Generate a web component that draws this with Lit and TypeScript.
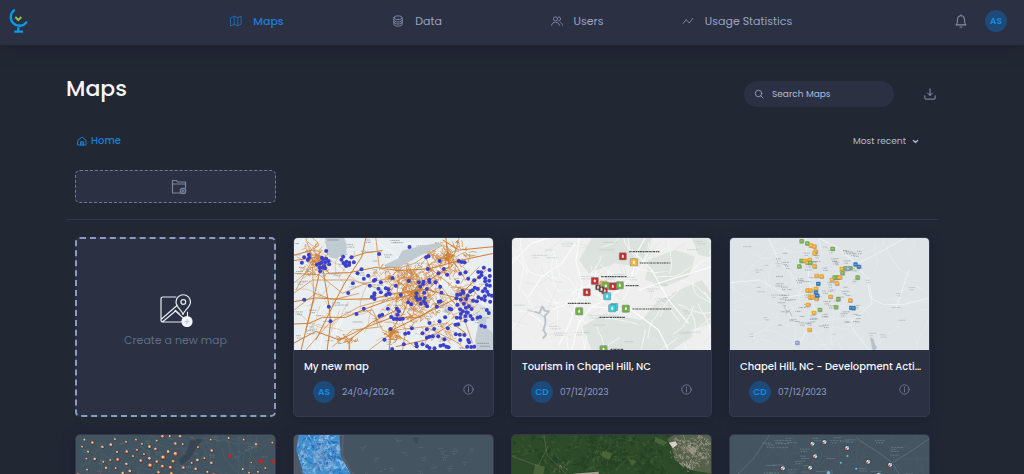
import { LitElement, html, css, svg, nothing } from 'lit';
import type { TemplateResult } from 'lit';
import { customElement, property } from 'lit/decorators.js';
import { classMap } from 'lit/directives/class-map.js';

/* ---------- helpers for the procedural map thumbnails ---------- */

type Rng = () => number;
type Pt = [number, number];

function rng(seed: number): Rng {
  let s = seed;
  return () => {
    s = (s + 0x6d2b79f5) | 0;
    let t = Math.imul(s ^ (s >>> 15), 1 | s);
    t = (t + Math.imul(t ^ (t >>> 7), 61 | t)) ^ t;
    return ((t ^ (t >>> 14)) >>> 0) / 4294967296;
  };
}

const n = (v: number) => v.toFixed(1);

/** A path of wandering strokes scattered over a box. */
function wander(r: Rng, count: number, x: number, y: number, w: number, h: number, step: number, parts = 6): string {
  let d = '';
  for (let i = 0; i < count; i++) {
    let px = x + r() * w;
    let py = y + r() * h;
    let a = r() * Math.PI * 2;
    d += `M${n(px)} ${n(py)}`;
    for (let k = 0; k < parts; k++) {
      a += (r() - 0.5) * 0.8;
      px += Math.cos(a) * step;
      py += Math.sin(a) * step;
      d += `L${n(px)} ${n(py)}`;
    }
  }
  return d;
}

/** Dense tangle of streets round a centre. */
function tangle(r: Rng, cx: number, cy: number, rx: number, ry: number, count: number, step: number): string {
  let d = '';
  for (let i = 0; i < count; i++) {
    const a = r() * Math.PI * 2;
    const q = r();
    const px = cx + Math.cos(a) * rx * q;
    const py = cy + Math.sin(a) * ry * q;
    d += `M${n(px)} ${n(py)}l${n((r() - 0.5) * step)} ${n((r() - 0.5) * step)}l${n((r() - 0.5) * step)} ${n((r() - 0.5) * step)}`;
  }
  return d;
}

/** Rows of tiny marks standing for place names too small to read. */
function marks(r: Rng, count: number, x: number, y: number, w: number, h: number, len = 26): string {
  let d = '';
  for (let i = 0; i < count; i++) {
    const px = x + r() * w;
    const py = y + r() * h;
    d += `M${n(px)} ${n(py)}h${n(len * (0.5 + r() * 0.7))}`;
    if (r() > 0.5) d += `M${n(px + 3)} ${n(py + 7)}h${n(len * (0.4 + r() * 0.4))}`;
  }
  return d;
}

function frame(x: number, y: number, w: number, h: number, body: TemplateResult<2>) {
  return html`<svg class="thumb" viewBox="${x} ${y} ${w} ${h}" preserveAspectRatio="xMidYMin slice" aria-hidden="true">${body}</svg>`;
}

/* ---------- thumbnails ---------- */

const NETWORK_DOTS: Pt[] = [
  [371, 51], [280, 72], [121, 63], [69, 74], [55, 82], [70, 83], [66, 90], [48, 98], [108, 83], [112, 88], [121, 86],
  [128, 93], [93, 104], [101, 101], [107, 98], [118, 97], [130, 103], [101, 113], [110, 113], [118, 115], [103, 124],
  [115, 108], [172, 80], [167, 89], [197, 82], [173, 99], [182, 95], [190, 98], [204, 97], [178, 104], [190, 105],
  [181, 108], [227, 118], [215, 130], [247, 137], [234, 146], [201, 160], [187, 189], [264, 152], [268, 149], [285, 157],
  [252, 167], [278, 176], [320, 144], [330, 167], [300, 175], [308, 178], [285, 187], [308, 189], [312, 192], [301, 195],
  [266, 190], [258, 201], [265, 196], [266, 207], [345, 195], [55, 209], [129, 230], [134, 274], [212, 252], [234, 236],
  [281, 258], [289, 254], [306, 236], [333, 236], [339, 244], [335, 254], [316, 261], [324, 267], [332, 267], [342, 268],
  [351, 266], [314, 297], [296, 329], [378, 295], [358, 311], [368, 309], [354, 343], [319, 357], [421, 82], [428, 79],
  [461, 93], [426, 117], [458, 130], [474, 117], [484, 134], [519, 93], [527, 96], [536, 97], [369, 153], [399, 157],
  [413, 155], [430, 149], [431, 156], [403, 170], [449, 157], [411, 162], [423, 177], [463, 170], [467, 188], [392, 190],
  [415, 188], [391, 201], [417, 204], [403, 206], [414, 214], [419, 221], [405, 221], [424, 229], [367, 217], [376, 223],
  [395, 209], [453, 230], [459, 215], [464, 214], [491, 236], [478, 262], [461, 274], [431, 279], [423, 298], [445, 297],
  [486, 295], [410, 310], [423, 323], [431, 320], [441, 319], [457, 319], [476, 328], [391, 341], [393, 349], [410, 343],
  [424, 349], [431, 354], [446, 355], [464, 347], [473, 345], [482, 350], [488, 352], [510, 313], [522, 314], [536, 315],
  [523, 330], [547, 330], [550, 337], [544, 350], [556, 351], [565, 350], [523, 131], [539, 127], [516, 156], [514, 194],
  [524, 193], [530, 183], [533, 188], [512, 205], [525, 209], [546, 197], [553, 185], [560, 181], [567, 173], [576, 177],
  [565, 151], [547, 146], [577, 126], [586, 127], [594, 113], [587, 136], [580, 142], [611, 120], [612, 138], [598, 145],
  [598, 154], [610, 152], [603, 165], [612, 167], [598, 176], [604, 185], [591, 184], [609, 194], [597, 199], [618, 197],
  [587, 206], [597, 210], [613, 215], [578, 202], [541, 207], [562, 212], [573, 214], [515, 224], [534, 221], [540, 233],
  [549, 229], [523, 238], [531, 244], [542, 247], [557, 237], [525, 252], [539, 258], [546, 248], [513, 263], [509, 284],
  [517, 283], [523, 263], [539, 272], [560, 267], [583, 261], [603, 240], [609, 249], [587, 287], [597, 290], [575, 263],
  [554, 258], [496, 238],
];

function networkMap() {
  const r = rng(11);
  return frame(23, 24, 600, 336, svg`
    <rect x="23" y="24" width="600" height="336" fill="#e9eef0"/>
    <path d="M480 180L623 240V330L560 250Z" fill="#dce3e5"/>
    <path d=${wander(r, 40, 23, 24, 600, 336, 16)} fill="none" stroke="#fff" stroke-width="2"/>
    <path d=${marks(r, 80, 23, 26, 580, 330)} stroke="#76818a" stroke-width="2.5" stroke-dasharray="3 2 5 1" opacity=".75"/>
    <g fill="none" stroke="#cf7f33" stroke-linejoin="round">
      <path stroke-width="3" d="M23 92L90 82 130 130 190 128 270 112 340 122 430 116 520 92 623 70M23 76L80 60 110 92M190 84L240 68 290 62M23 215L90 204 180 208 262 206 330 190 420 178 520 206 560 196M23 282L70 280 110 262 180 262 240 236 300 214 370 196M46 360L70 260 96 150 108 90M23 340L90 304 160 330 240 292 320 262 400 262 480 210M110 110L130 230 134 280 124 360M190 360L190 330 260 276 340 236M240 24L228 80 176 160 150 210 90 330M380 180L352 250 316 300 310 360M316 302L420 250 510 206 600 120M480 24L490 110 430 150 380 210M470 30L520 60 623 50M540 310L500 280 420 330 330 350"/>
      <path stroke-width="2" d="M23 130L100 134 170 190 240 160 320 142M60 24L80 90 30 180M23 190L80 150 200 150 290 180M250 360L330 300 420 290 520 340M200 250L260 240 290 300 360 330 400 360M440 120L500 170 560 180 600 220M340 120L330 230 360 300 350 360M520 24L500 90 540 150 580 110M420 84L450 150 530 250 560 340M25 240L90 190 140 210 220 190M140 350L200 300 290 290M270 24L280 110M60 360L130 280 220 230 330 200M80 110L84 210 60 300M23 160L70 120M240 240L270 262 276 290"/>
      <path stroke-width="1.6" d=${tangle(r, 92, 90, 40, 56, 110, 26)}/>
      <path stroke-width="1.8" d=${tangle(r, 385, 190, 88, 90, 330, 28)}/>
      <path stroke-width="1.8" d=${tangle(r, 485, 85, 70, 54, 150, 26)}/>
      <path stroke-width="1.5" d=${tangle(r, 530, 200, 60, 80, 80, 30)}/>
      <path stroke-width="2.4" d=${tangle(r, 318, 312, 20, 22, 50, 18)}/>
      <path stroke-width="1.6" d=${tangle(r, 350, 135, 90, 30, 60, 30)}/>
      <path stroke-width="1.2" opacity=".8" d=${wander(r, 28, 23, 100, 480, 240, 16)}/>
      <path stroke-width="1.4" d=${tangle(r, 480, 310, 80, 40, 30, 34)}/>
      <path stroke-width="2" d=${tangle(r, 180, 330, 40, 12, 24, 20)}/>
    </g>
    <path d="M118 24l4 30 8 28 20 4 28-14 6-20-8-28z" fill="#c0cad1"/>
    <path d="M296 104l40-18 14-24 40-10 60-12 16-2-6 12-40 18-40 22-40 22-40 4z" fill="#c0cad1"/>
    <path d="M572 250l6 30-10 50 4 30h51V312l-24-24 4-20z" fill="#c3ccd3"/>
    <path d="M296 112l50 0 40-12 50-34 36-22" fill="none" stroke="#cf7f33" stroke-width="2"/>
    <path d="M575 340h34M584 349h28M326 38h26M125 30h34" stroke="#76818a" stroke-width="2.5" stroke-dasharray="4 2"/>
    <g fill="#3c41cc">${NETWORK_DOTS.map(([x, y]) => svg`<circle cx=${x} cy=${y} r="6"/>`)}</g>`);
}

function pin(x: number, y: number, fill: string, size = 20) {
  return svg`<rect x=${x - size / 2 - 2} y=${y - size / 2 - 2} width=${size + 4} height=${size + 4} rx="4" fill="#6d7275" opacity=".65"/>
    <rect x=${x - size / 2} y=${y - size / 2} width=${size} height=${size} rx="3" fill=${fill}/>
    <path d="M${x - 3} ${y + 4}v-6l3-4 3 4v6z" fill="#fff" opacity=".9"/>`;
}

function tourismMap() {
  const r = rng(29);
  const red = '#c62f31', green = '#6fae45', amber = '#f2b43a', cyan = '#3ccbdc', brown = '#5b3a35';
  return frame(19, 24, 600, 336, svg`
    <rect x="19" y="24" width="600" height="336" fill="#eeefee"/>
    <path d="M260 24H440L430 60 400 110 330 100 250 130 222 90zM500 190l90-40 29 40v90l-60 20-50-50zM230 290l70-40 110 20 50-60 60-20 50 60-10 70-60 40H260zM430 90l80-30 60 20-20 60-70 30-60-20zM560 24h59v60l-40-10z" fill="#dde3df"/>
    <path d=${wander(r, 60, 19, 24, 600, 336, 18)} fill="none" stroke="#f9fafa" stroke-width="2.5"/>
    <path d=${wander(r, 40, 19, 24, 600, 336, 15)} fill="none" stroke="#dde1df" stroke-width="1.5"/>
    <path d="M88 245l15 5 8-20 8 12 12 2-12 14 2 20-6 22 8 14-10 12" fill="none" stroke="#bcc5cb" stroke-width="6" stroke-linejoin="round"/>
    <path d="M119 262l-14-10M66 240l22 6" fill="none" stroke="#bcc5cb" stroke-width="2.5"/>
    <path d="M19 100l60-60 50-16M70 200l40-60 60-40 40-60M200 360l20-80 40-50 60-30 60-60 20-80 20-36M260 230l120 10 80 60 30 60M380 60l60 60 50 90 60 70M222 24l-10 70 20 70-40 120-30 60M400 180l90-30 129-40" fill="none" stroke="#fbfcfc" stroke-width="3.5"/>
    <path d=${marks(r, 26, 24, 30, 560, 320, 40)} stroke="#9ba9b2" stroke-width="2" stroke-dasharray="3 2 5 1" opacity=".6"/>
    <path d="M372 65h92M404 99h92M288 140h76M362 167h40M188 220h68M382 237h116M283 262h76M316 358h38" stroke="#4b4e50" stroke-width="3.5" stroke-dasharray="5 1.5 3 1.5 7 2"/>
    ${pin(353, 79, red)}${pin(386, 97, amber)}${pin(269, 153, red)}${pin(295, 164, amber)}${pin(302, 168, green)}
    ${pin(331, 169, red, 18)}${pin(323, 169, red)}${pin(344, 166, green)}${pin(298, 183, red, 16)}${pin(279, 172, brown, 14)}${pin(289, 178, brown, 14)}
    ${pin(245, 187, red)}${pin(306, 199, cyan)}${pin(327, 231, cyan)}${pin(321, 235, cyan)}${pin(362, 236, green)}
    ${pin(222, 244, green)}${pin(295, 358, green)}`);
}

const DEV_POINTS: [number, number, string][] = [
  [238, 33, 'g'], [255, 40, 'g'], [266, 46, 'a'], [276, 49, 'a'], [280, 64, 'a'], [277, 69, 'a'], [331, 56, 'g'],
  [238, 92, 'g'], [248, 92, 'a'], [256, 97, 'a'], [262, 89, 'a'], [264, 98, 'g'], [231, 109, 'g'], [277, 109, 'a'],
  [283, 137, 'a'], [298, 139, 'a'], [288, 161, 'b'], [281, 176, 'a'], [256, 181, 'a'], [265, 181, 'a'], [281, 187, 'b'],
  [264, 202, 'a'], [271, 201, 'a'], [283, 206, 'a'], [285, 197, 'b'], [257, 224, 'a'], [275, 248, 'a'], [293, 239, 'g'],
  [325, 200, 'a'], [348, 207, 'g'], [341, 231, 'g'], [384, 211, 'a'], [387, 233, 'b'], [394, 234, 'b'], [262, 299, 'a'],
  [225, 338, 'l'], [359, 116, 'a'], [370, 114, 'g'], [384, 114, 'g'], [377, 116, 'l'], [400, 103, 'b'], [410, 110, 'b'],
  [361, 129, 'g'], [406, 142, 'g'], [337, 142, 'g'], [329, 149, 'a'], [347, 142, 'g'], [353, 142, 'a'], [344, 160, 'a'],
];

function developmentMap() {
  const r = rng(53);
  const tone: Record<string, string> = { g: '#74b047', a: '#f3a92c', b: '#2f78bf', l: '#8e9fd6' };
  return frame(23, 24, 598, 336, svg`
    <rect x="23" y="24" width="598" height="336" fill="#dfe4e7"/>
    <path d=${wander(r, 60, 23, 24, 598, 336, 18)} fill="none" stroke="#e7ebed" stroke-width="2"/>
    <path d="M290 24l60 30 54 50 30 40 10 60 40 20h60l77-20M400 104l60-30 90-50M23 158l90-8 90 50 60-10M140 24l30 70 60 60M250 24l10 120 20 110-50 90M440 140l10 80-70 60 60 80M560 120l-40 120" fill="none" stroke="#eff2f3" stroke-width="3"/>
    <path d="M444 322l10 4 4 16 6 10-4 8h-8l-4-14z" fill="#b9c1c9"/>
    <path d="M186 228l6 14 10 2 8 16M190 252l14-14" fill="none" stroke="#b9c1c9" stroke-width="3"/>
    <path d=${marks(r, 85, 160, 60, 250, 230, 20)} stroke="#6f787f" stroke-width="2.2" stroke-dasharray="3 2 5 1" opacity=".7"/>
    <path d=${marks(r, 22, 30, 30, 560, 300, 22)} stroke="#8c959c" stroke-width="2" stroke-dasharray="3 2 5 1" opacity=".7"/>
    ${DEV_POINTS.map(([x, y, k]) => svg`<rect x=${x - 6} y=${y - 5} width="14" height="13" rx="3" fill="#6a6f73" opacity=".5"/><rect x=${x - 6} y=${y - 6} width="12" height="12" rx="2" fill=${tone[k]}/><path d="M${x - 3} ${y}h6" stroke="#fff" stroke-width="2.5" opacity=".5"/>`)}`);
}

const INCIDENTS: [number, number, number][] = [
  [73, 41, 4], [97, 50, 5], [66, 62, 4], [127, 63, 5], [84, 77, 4], [79, 98, 4], [104, 99, 5], [81, 131, 4], [152, 56, 5],
  [165, 40, 4], [198, 48, 4], [228, 41, 4], [171, 78, 4], [200, 77, 5], [151, 103, 4], [130, 108, 4], [173, 101, 6],
  [199, 114, 5], [167, 127, 4], [138, 126, 5], [209, 135, 5], [188, 141, 5], [231, 72, 4], [246, 54, 4], [268, 62, 5],
  [219, 91, 4], [242, 104, 5], [252, 85, 4], [268, 97, 5], [286, 69, 5], [290, 44, 4], [307, 31, 5], [329, 31, 4],
  [346, 53, 5], [360, 31, 5], [368, 55, 4], [324, 77, 5], [346, 83, 7], [309, 94, 7], [290, 107, 5], [270, 118, 7],
  [307, 121, 6], [331, 124, 6], [339, 106, 5], [334, 143, 5], [295, 139, 5], [370, 125, 5], [395, 111, 4], [412, 102, 5],
  [433, 97, 4], [407, 129, 5], [454, 111, 5], [442, 138, 4], [455, 74, 5], [414, 64, 4], [452, 41, 4], [506, 37, 4],
  [551, 41, 4], [588, 55, 5], [637, 50, 4], [548, 130, 4], [567, 140, 4], [594, 138, 4], [616, 127, 4], [574, 110, 3],
  [54, 146, 5], [461, 146, 5],
];

function incidentsMap() {
  const r = rng(71);
  return frame(46, 27, 600, 336, svg`
    <rect x="46" y="27" width="600" height="336" fill="#435461"/>
    <path d=${wander(r, 50, 46, 27, 600, 150, 16)} fill="none" stroke="#4e606d" stroke-width="2"/>
    <path d="M392 40l36 0-22 30-14 24-28 24-8-16 22-20z" fill="#384452"/>
    <path d=${marks(r, 30, 50, 30, 560, 130, 18)} stroke="#71818d" stroke-width="2" stroke-dasharray="3 2"/>
    <path d="M536 27V363" stroke="#4f606c" stroke-width="2"/>
    ${INCIDENTS.map(([x, y, s], i) => svg`<circle cx=${x + 1} cy=${y + 1} r=${s} fill="#4b2f31"/><circle cx=${x} cy=${y} r=${s - 1} fill=${s > 5 ? '#d9603f' : i % 4 ? '#d98a62' : '#e8b27c'}/><circle cx=${x - 1} cy=${y - 1} r=${s / 2} fill="#f2cf9f"/>`)}
    <g fill="#b3292c"><circle cx="509" cy="90" r="6"/><circle cx="602" cy="106" r="7"/><circle cx="639" cy="106" r="6"/><circle cx="117" cy="148" r="6"/></g>`);
}

function coastMap() {
  const r = rng(97);
  return frame(698, 27, 600, 336, svg`
    <defs><clipPath id="land"><path d="M714 27H836L840 90 868 142 960 220V363H760L724 130 706 70z"/></clipPath></defs>
    <rect x="698" y="27" width="600" height="336" fill="#445561"/>
    <path d="M698 27h24v40l24 70 20 100H698z" fill="#4d5868"/>
    <path d="M838 27h8l-2 60 26 50 90 80" fill="none" stroke="#6c6878" stroke-width="6" opacity=".5"/>
    <g clip-path="url(#land)">
      <rect x="698" y="27" width="300" height="336" fill="#3f8fce"/>
      <path d=${tangle(r, 780, 95, 90, 90, 220, 34)} fill="#a9d0ec" opacity=".65"/>
      <path d=${tangle(r, 790, 100, 100, 100, 130, 30)} fill="#1767b0" opacity=".7"/>
      <path d=${tangle(r, 780, 90, 80, 90, 110, 24)} fill="none" stroke="#7d91bd" stroke-width="1.5"/>
    </g>
    <path d=${marks(r, 26, 890, 35, 380, 110, 14)} stroke="#61717d" stroke-width="2.5" stroke-dasharray="3 2"/>
    <path d="M1055 34h20l-6 18h-8z" fill="#3d4a58"/>`);
}

function satelliteMap() {
  const r = rng(131);
  return frame(33, 27, 600, 336, svg`
    <rect x="33" y="27" width="600" height="336" fill="#2d4a29"/>
    <path d=${tangle(r, 330, 90, 320, 100, 260, 46)} fill="#233f22" opacity=".75"/>
    <path d=${tangle(r, 330, 90, 320, 100, 200, 26)} fill="#3d5d35" opacity=".7"/>
    <path d="M306 74l30 8-10 20-24-12zM104 114l30 8-6 26-30-4zM464 32l36 16-10 12-28-12zM384 98l24 8-14 14z" fill="#496238"/>
    <path d=${wander(r, 14, 33, 27, 480, 150, 14)} fill="none" stroke="#5b7150" stroke-width="1.2" opacity=".7"/>
    <path d="M33 90l80 30 30-60M130 27l10 60 60 60" fill="none" stroke="#6d7a60" stroke-width="1.5"/>
    <path d="M500 40l20-13h113v116l-60-10-50-30-10-40z" fill="#55614a"/>
    <path d=${tangle(r, 575, 70, 66, 56, 260, 12)} fill="none" stroke="#a29d91" stroke-width="1.8"/>
    <path d=${tangle(r, 565, 120, 20, 14, 40, 12)} fill="#b5ada0"/>
    <path d="M218 143l76-6 4 30h-80zM310 144h130v16H310z" fill="#a69e8f"/>
    <path d=${tangle(r, 180, 120, 30, 24, 36, 10)} fill="#7b8268"/>
    <path d="M505 50l20-4 6 10-14 10z" fill="#d5d2c9"/>`);
}

const STATIONS: Pt[] = [[937, 53], [973, 48], [1041, 66], [945, 91], [1104, 107], [1170, 116], [848, 127], [930, 125], [1136, 146]];

function stationsMap() {
  const r = rng(151);
  return frame(688, 27, 600, 336, svg`
    <rect x="688" y="27" width="600" height="336" fill="#455461"/>
    <path d=${wander(r, 34, 688, 27, 600, 150, 18)} fill="none" stroke="#4c5c6a" stroke-width="2"/>
    <path d="M1068 36l70 46 38 28 60 100M1176 110l50-30 62-42M688 170l70-70 50-73" fill="none" stroke="#5c6c7a" stroke-width="3"/>
    <path d=${marks(r, 34, 770, 32, 450, 120, 32)} stroke="#71808d" stroke-width="2.5" stroke-dasharray="4 2 2 1"/>
    ${STATIONS.map(([x, y]) => svg`<circle cx=${x} cy=${y} r="8" fill="#353f4e"/><circle cx=${x} cy=${y} r="6" fill="#e2e8ea"/><path d="M${x} ${y}v6a6 6 0 0 1-6-6z" fill="#d4574a"/><path d="M${x} ${y}v-6a6 6 0 0 1 6 6z" fill="#62aecb"/>`)}
    <g fill="#68bfd4"><circle cx="985" cy="140" r="5"/><circle cx="1068" cy="128" r="3"/><circle cx="1022" cy="110" r="3"/><circle cx="1042" cy="90" r="3"/></g>`);
}

/* ---------- icons ---------- */

const icons = {
  maps: svg`<path d="M1.5 4.5 7 2l6 2.5L18.500 2v13.500L13 18l-6-2.500L1.500 18zM7 2v13.500M13 4.500V18"/>`,
  data: svg`<path d="M3 4.500C3 2.500 6 1.500 10 1.500s7 1 7 3v11c0 2-3 3-7 3s-7-1-7-3zM3 4.500c0 2 3 3 7 3s7-1 7-3M3 8.500c0 2 3 3 7 3s7-1 7-3M3 12c0 2 3 3 7 3s7-1 7-3"/>`,
  users: svg`<circle cx="7.500" cy="6.500" r="3.500"/><path d="M1 17c.5-3.500 3-5 6.500-5s6 1.500 6.500 5M12.500 3a3.500 3.500 0 0 1 0 7M16 12.500c1.800.8 2.700 2.200 3 4.500"/>`,
  stats: svg`<path d="M2 14 7 7.500l5 6L18 5.500"/>`,
  bell: svg`<path d="M3 15.500c1.500-1.500 2-3 2-6.500 0-4 2-6.500 5-6.500s5 2.500 5 6.500c0 3.500.5 5 2 6.500zM8.500 18.500h3M10 1v1.500"/>`,
  search: svg`<circle cx="9" cy="9" r="6.500"/><path d="m14 14 4 4"/>`,
  download: svg`<path d="M10 1.500V12M6 8.500l4 4 4-4M1.500 13v4.500q0 1 1 1h15q1 0 1-1V13"/>`,
  home: svg`<path d="M2 8.500 10 2l8 6.500V18H2zM7 18v-6.500h6V18M10 12v6"/>`,
  chevron: svg`<path d="m4 7 6 6 6-6"/>`,
  info: svg`<circle cx="10" cy="10" r="8.500"/><path d="M10 9v5.500M10 5.500v1.500"/>`,
};

type IconName = keyof typeof icons;

const icon = (name: IconName, cls: string) =>
  html`<svg class="icon ${cls}" viewBox="0 0 20 20" aria-hidden="true">${icons[name]}</svg>`;

/* ---------- data ---------- */

interface MapEntry {
  title?: string;
  owner?: string;
  date?: string;
  thumb: TemplateResult;
}

const MAPS: MapEntry[] = [
  { title: 'My new map', owner: 'AS', date: '24/04/2024', thumb: networkMap() },
  { title: 'Tourism in Chapel Hill, NC', owner: 'CD', date: '07/12/2023', thumb: tourismMap() },
  { title: 'Chapel Hill, NC - Development Acti…', owner: 'CD', date: '07/12/2023', thumb: developmentMap() },
  { thumb: incidentsMap() },
  { thumb: coastMap() },
  { thumb: satelliteMap() },
  { thumb: stationsMap() },
];

const NAV: { label: string; icon: IconName; active?: boolean }[] = [
  { label: 'Maps', icon: 'maps', active: true },
  { label: 'Data', icon: 'data' },
  { label: 'Users', icon: 'users' },
  { label: 'Usage Statistics', icon: 'stats' },
];

const shared = css`
  *, *::before, *::after { box-sizing: border-box; }
  button, input, select { font: inherit; color: inherit; background: none; border: 0; padding: 0; margin: 0; }
  button { cursor: pointer; }
  a { color: inherit; text-decoration: none; }
  .icon { display: block; flex: none; fill: none; stroke: currentColor; stroke-width: 1.5; stroke-linecap: round; stroke-linejoin: round; }
  .avatar {
    display: grid; place-items: center; flex: none; width: 22px; height: 22px; border-radius: 50%;
    background: #1d4a78; color: #148be2; font-size: 9px; line-height: 12px; font-weight: 600;
  }
`;

@customElement('map-card')
export class MapCard extends LitElement {
  @property({ attribute: false }) entry!: MapEntry;

  static styles = [shared, css`
    :host { display: block; min-width: 0; }
    .card {
      display: flex; flex-direction: column; min-height: 180px; overflow: hidden;
      border: 1px solid #343950; border-radius: 5px; background: #2b3043; box-shadow: 0 2px 12px #1d2030;
    }
    .thumb { display: block; width: 100%; aspect-ratio: 199 / 112; }
    .body { padding: 8px 3px 0 10px; }
    .title {
      margin: 0; font-size: 10px; line-height: 17px; font-weight: 500; color: #f6f7fa;
      white-space: nowrap; overflow: hidden; text-overflow: ellipsis;
    }
    .meta { display: flex; align-items: center; gap: 7px; padding: 6px 16px 0 9px; }
    .date { flex: 1; font-size: 9px; line-height: 16px; color: #8e9cc4; }
    .info { color: #76809a; align-self: flex-start; padding-top: 3px; }
    .i-info { width: 11px; height: 11px; }
  `];

  render() {
    const { title, owner, date, thumb } = this.entry;
    return html`<article class="card">
      ${thumb}
      ${title
        ? html`<div class="body">
            <h2 class="title">${title}</h2>
            <div class="meta">
              <span class="avatar">${owner}</span>
              <time class="date">${date}</time>
              <button class="info" aria-label="Map details">${icon('info', 'i-info')}</button>
            </div>
          </div>`
        : nothing}
    </article>`;
  }
}

@customElement('app-root')
export class AppRoot extends LitElement {
  static styles = [shared, css`
    :host {
      display: flex; flex-direction: column; height: 100vh; overflow: hidden;
      background: #222734; color: #a9b4d0; font-family: Poppins, Inter, sans-serif; font-size: 12px;
    }
    .bar {
      flex: none; display: grid; grid-template-columns: 170fr 640fr 190fr; align-items: center;
      height: 45px; padding: 0 17px 0 7px; background: #2c3043; box-shadow: 0 2px 16px #1e202c; position: relative; z-index: 1;
    }
    .home-link { display: block; padding-bottom: 3px; }
    .logo { display: block; width: 22px; height: 26px; }
    .nav { display: grid; grid-template-columns: repeat(4, 1fr); padding-bottom: 3px; }
    .nav-link {
      display: flex; align-items: center; justify-content: center; gap: 11px;
      font-size: 11px; line-height: 18px; color: #97a3c3; white-space: nowrap;
    }
    .nav-link.active { color: #1a7fd6; font-weight: 500; }
    .i-nav { width: 12px; height: 12px; opacity: .8; }
    .account { display: flex; align-items: center; justify-content: flex-end; gap: 17px; padding-bottom: 3px; }
    .i-bell { width: 14px; height: 14px; color: #858fa9; }

    .page { flex: 1; min-height: 0; overflow-y: auto; scrollbar-width: none; padding: 26px 86px 24px 66px; }
    .head { display: flex; align-items: center; gap: 30px; }
    .heading { margin: 0; flex: 1; font-size: 22px; line-height: 34px; font-weight: 500; color: #f4f5f8; }
    .search {
      display: flex; align-items: center; gap: 8px; width: 150px; height: 26px; margin-top: 10px; padding: 0 10px;
      border-radius: 13px; background: #2b3043;
    }
    .field { flex: 1; min-width: 0; font-size: 9px; line-height: 14px; outline: 0; }
    .field::placeholder { color: #b0bbd8; opacity: 1; }
    .i-search { width: 10px; height: 10px; }
    .download { margin-top: 10px; padding-right: 2px; color: #98a2bd; }
    .i-download { width: 12px; height: 12px; }

    .tools { display: flex; align-items: center; justify-content: space-between; padding: 26px 19px 0 11px; }
    .home { display: flex; align-items: center; gap: 4px; font-size: 10px; line-height: 16px; font-weight: 500; color: #1a7fd6; }
    .i-home { width: 10px; height: 10px; stroke-width: 2; }
    .sort { display: flex; align-items: center; gap: 6px; color: #b0bbd8; }
    .select { appearance: none; font-size: 9px; line-height: 14px; outline: 0; }
    .i-chevron { width: 7px; height: 7px; stroke-width: 3.5; }

    .folders, .grid { display: grid; grid-template-columns: repeat(4, minmax(0, 1fr)); gap: 17px; padding: 0 8px 0 9px; }
    .folders { margin-top: 21px; }
    .new-folder {
      display: grid; place-items: center; height: 33px; padding-left: 7px; border: 1px dashed #6f7a98; border-radius: 5px;
      background: #2b3043; color: #7c869e;
    }
    .i-folder { width: 16px; height: 16px; stroke-width: 1.2; }
    .rule { height: 1px; margin: 16px 0 17px; border: 0; background: #32384a; }
    .new-map {
      display: flex; flex-direction: column; align-items: center; justify-content: center; gap: 4px; min-height: 180px;
      padding-bottom: 12px; border: 2px dashed #8f9ac0; border-radius: 5px; background: #2b3043; color: #5f6c82;
      font-size: 11px; line-height: 18px;
    }
    .i-new-map { width: 34px; height: 34px; stroke: #e6e9ee; stroke-width: 1.2; }
  `];

  render() {
    return html`
      <header class="bar">
        <a class="home-link" href="#" aria-label="Start page">
          <svg class="logo" viewBox="0 0 66 78" aria-hidden="true">
            <g fill="none" stroke="#0a9be8" stroke-width="7">
              <path d="M21 7A26 26 0 1 0 58 43" stroke-linecap="round"/>
              <path d="M34 58v12M22 71h26"/>
            </g>
            <path d="m25 27 9 9 9-9" fill="none" stroke="#8cc152" stroke-width="6"/>
          </svg>
        </a>
        <nav class="nav">
          ${NAV.map((item) => html`<a href="#" class=${classMap({ 'nav-link': true, active: !!item.active })}>${icon(item.icon, 'i-nav')}${item.label}</a>`)}
        </nav>
        <div class="account">
          <button aria-label="Notifications">${icon('bell', 'i-bell')}</button>
          <button class="avatar" aria-label="Account">AS</button>
        </div>
      </header>
      <main class="page">
        <div class="head">
          <h1 class="heading">Maps</h1>
          <label class="search">
            ${icon('search', 'i-search')}
            <input class="field" type="search" placeholder="Search Maps" aria-label="Search Maps">
          </label>
          <button class="download" aria-label="Download">${icon('download', 'i-download')}</button>
        </div>
        <div class="tools">
          <a class="home" href="#">${icon('home', 'i-home')}Home</a>
          <label class="sort">
            <select class="select" aria-label="Sort order"><option>Most recent</option></select>
            ${icon('chevron', 'i-chevron')}
          </label>
        </div>
        <div class="folders">
          <button class="new-folder" aria-label="New folder">
            <svg class="icon i-folder" viewBox="0 0 16 16" aria-hidden="true">
              <path d="M9.500 14H1.500V1.500h4l1 1.500h8V9M1.500 5h13"/><circle cx="12" cy="12" r="2.700"/><path d="M12 10.800v2.400M10.800 12h2.400"/>
            </svg>
          </button>
        </div>
        <hr class="rule">
        <section class="grid">
          <button class="new-map">
            <svg class="icon i-new-map" viewBox="0 0 34 34" aria-hidden="true">
              <path d="M17 4H4Q2 4 2 6v21q0 2 2 2h20M28.500 19v5M2.500 26 18 12.500M4 28.500 16.500 18l10 9M15.500 18.500l1-1 4 3.500"/>
              <path d="M24 21.500c-1-4-7-7.500-7-12.500a7 7 0 0 1 14.500 0c0 5-6.500 8.500-7.500 12.500z"/><circle cx="24.300" cy="9" r="2.400"/>
              <circle cx="28" cy="28.500" r="5.600" fill="#f3f5f8" stroke="none"/><path d="M28 26.700v3.600M26.200 28.500h3.600" stroke="#c3c9d2"/>
            </svg>
            Create a new map
          </button>
          ${MAPS.map((entry) => html`<map-card .entry=${entry}></map-card>`)}
        </section>
      </main>`;
  }
}
